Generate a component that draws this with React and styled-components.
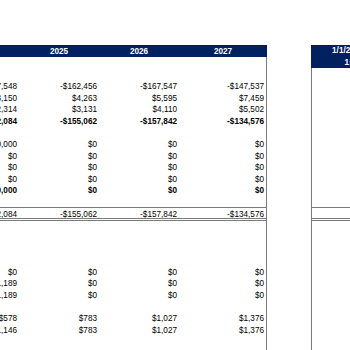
import React from "react";
import styled, { createGlobalStyle } from "styled-components";

const ROW_H = 11.6;

const GlobalStyle = createGlobalStyle`
    html, body {
        margin: 0;
        padding: 0;
        background: #ffffff;
    }
    body {
        font-family: "Liberation Sans", Arial, sans-serif;
        font-size: 8.2px;
        color: #000000;
    }
`

const YEARS = ["2024", "2025", "2026", "2027"];

const ROWS = [
    { cells: [] },
    { cells: [] },
    { cells: ["-$127,548", "-$162,456", "-$167,547", "-$147,537"] },
    { cells: ["$3,150", "$4,263", "$5,595", "$7,459"] },
    { cells: ["$2,314", "$3,131", "$4,110", "$5,502"] },
    { cells: ["-$122,084", "-$155,062", "-$157,842", "-$134,576"], bold: true },
    { cells: [] },
    { cells: ["$50,000", "$0", "$0", "$0"] },
    { cells: ["$0", "$0", "$0", "$0"] },
    { cells: ["$0", "$0", "$0", "$0"] },
    { cells: ["$0", "$0", "$0", "$0"] },
    { cells: ["$50,000", "$0", "$0", "$0"], bold: true },
    { cells: [] },
    { cells: ["-$72,084", "-$155,062", "-$157,842", "-$134,576"], total: true },
    { cells: [] },
    { cells: [] },
    { cells: [] },
    { cells: [] },
    { cells: ["$0", "$0", "$0", "$0"] },
    { cells: ["$1,189", "$0", "$0", "$0"] },
    { cells: ["$1,189", "$0", "$0", "$0"] },
    { cells: [] },
    { cells: ["$578", "$783", "$1,027", "$1,376"] },
    { cells: ["$1,146", "$783", "$1,027", "$1,376"] },
    { cells: [] },
    { cells: [] },
];

function App() {
    return (
        <>
            <GlobalStyle />
            <Viewport>
                <Sheet>
                    <MainTable>
                        <HeaderRow>
                            {YEARS.map((y) => (
                                <HeaderCell key={y}>{y}</HeaderCell>
                            ))}
                        </HeaderRow>
                        <Body>
                            {ROWS.map((row, i) => (
                                <Row key={i} $total={row.total}>
                                    {[0, 1, 2, 3].map((c) => (
                                        <Cell key={c} $bold={row.bold}>
                                            {row.cells[c] || ""}
                                        </Cell>
                                    ))}
                                </Row>
                            ))}
                        </Body>
                    </MainTable>
                    <Gap />
                    <SideTable>
                        <SideHeader>
                            <span>1/1/2028 -</span>
                            <span>1st</span>
                        </SideHeader>
                        <SideBody>
                            {ROWS.slice(1).map((row, i) => (
                                <SideRow key={i} $total={row.total} />
                            ))}
                        </SideBody>
                    </SideTable>
                </Sheet>
            </Viewport>
        </>
    )
}

export default App;

const Viewport = styled.div`
    width: 350px;
    height: 350px;
    overflow: hidden;
    padding-top: 45px;
    box-sizing: border-box;
`
const Sheet = styled.div`
    display: flex;
    flex-direction: row;
    align-items: flex-start;
    margin-left: -61px;
`
const MainTable = styled.div`
    display: flex;
    flex-direction: column;
    flex-shrink: 0;
    width: 328px;
`
const HeaderRow = styled.div`
    display: grid;
    grid-template-columns: 80px 80px 80px 88px;
    height: ${ROW_H}px;
    background-color: #002060;
    box-shadow: inset 0 1px 0 #1a1a2e;
`
const HeaderCell = styled.div`
    display: flex;
    align-items: center;
    justify-content: center;
    color: #ffffff;
    font-weight: bold;
    padding-top: 1px;
`
const Body = styled.div`
    border-right: 1px solid #7a7a7a;
`
const Row = styled.div`
    display: grid;
    grid-template-columns: 80px 80px 80px 87px;
    height: ${ROW_H}px;
    box-sizing: border-box;
    ${({ $total }) => $total && `
        border-top: 1px solid #7a7a7a;
        border-bottom: 3px double #7a7a7a;
        height: ${ROW_H + 2}px;
        margin-bottom: -2px;
    `}
`
const Cell = styled.div`
    display: flex;
    align-items: center;
    justify-content: flex-end;
    padding-right: 2px;
    padding-top: 2px;
    white-space: nowrap;
    overflow: hidden;
    font-weight: ${({ $bold }) => ($bold ? "bold" : "normal")};
`
const Gap = styled.div`
    width: 44px;
    flex-shrink: 0;
`
const SideTable = styled.div`
    display: flex;
    flex-direction: column;
    flex-shrink: 0;
    width: 79px;
`
const SideHeader = styled.div`
    display: flex;
    flex-direction: column;
    align-items: center;
    justify-content: center;
    height: ${ROW_H * 2}px;
    background-color: #002060;
    color: #ffffff;
    font-weight: bold;
    line-height: 12px;
    box-shadow: inset 0 1px 0 #1a1a2e;
`
const SideBody = styled.div`
    border-left: 1px solid #7a7a7a;
`
const SideRow = styled.div`
    height: ${ROW_H}px;
    box-sizing: border-box;
    ${({ $total }) => $total && `
        border-top: 1px solid #7a7a7a;
        border-bottom: 3px double #7a7a7a;
        height: ${ROW_H + 2}px;
        margin-bottom: -2px;
    `}
`
